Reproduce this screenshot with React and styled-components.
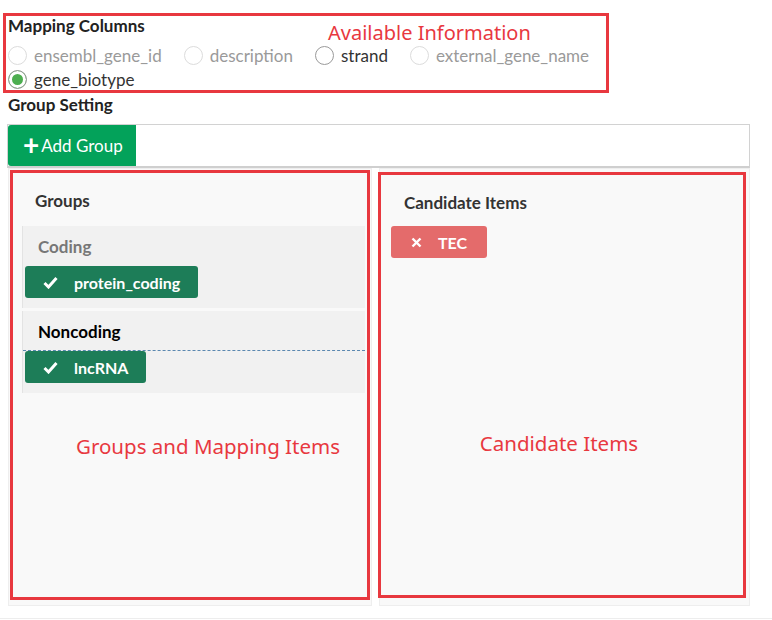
import React from 'react';
import styled, {createGlobalStyle} from 'styled-components';

const GlobalStyle = createGlobalStyle`
  body {
    margin: 0;
    background: #fff;
    font-family: Lato, "Noto Sans", sans-serif;
    color: #333;
  }
`;

const columns = [
  {name: 'ensembl_gene_id', disabled: true},
  {name: 'description', disabled: true},
  {name: 'strand'},
  {name: 'external_gene_name', disabled: true},
  {name: 'gene_biotype', checked: true},
];

const groups = [
  {title: 'Coding', muted: true, items: ['protein_coding']},
  {title: 'Noncoding', dashed: true, items: ['lncRNA']},
];

const CheckIcon = () => (
  <svg width="15" height="13" viewBox="0 0 15 13">
    <path d="M1.5 7 L5.5 11 L13.5 2" fill="none" stroke="#fff" strokeWidth="3" />
  </svg>
);

const CrossIcon = () => (
  <svg width="11" height="11" viewBox="0 0 11 11">
    <path d="M1.5 1.5 L9.5 9.5 M9.5 1.5 L1.5 9.5" fill="none" stroke="#fff" strokeWidth="2.4" />
  </svg>
);

export default function App() {
  return (
    <Page>
      <GlobalStyle/>
      <MappingBox>
        <Note $top={7} $left={322}>Available Information</Note>
        <SectionTitle>Mapping Columns</SectionTitle>
        <RadioList>
          {columns.map((c) => (
            <RadioItem key={c.name} $disabled={c.disabled}>
              <RadioDot $checked={c.checked} $disabled={c.disabled}/>
              {c.name}
            </RadioItem>
          ))}
        </RadioList>
      </MappingBox>
      <SettingTitle>Group Setting</SettingTitle>
      <Toolbar>
        <AddButton><Plus>+</Plus>Add Group</AddButton>
      </Toolbar>
      <Panels>
        <Panel>
          <Marked>
            <PanelTitle>Groups</PanelTitle>
            {groups.map((g) => (
              <GroupCard key={g.title}>
                <GroupTitle $muted={g.muted} $dashed={g.dashed}>{g.title}</GroupTitle>
                <TagRow>
                  {g.items.map((it) => (
                    <Tag key={it}><CheckIcon/>{it}</Tag>
                  ))}
                </TagRow>
              </GroupCard>
            ))}
            <CenterNote $top={260} $shift={36}>Groups and Mapping Items</CenterNote>
          </Marked>
        </Panel>
        <Panel>
          <Marked $side>
            <PanelTitle>Candidate Items</PanelTitle>
            <TagRow $pad={0} $lift={2}>
              <Tag $danger><CrossIcon/>TEC</Tag>
            </TagRow>
            <CenterNote $top={255} $shift={-6}>Candidate Items</CenterNote>
          </Marked>
        </Panel>
      </Panels>
      <BottomLine/>
    </Page>
  );
}

const Page = styled.div`
  width: 743px;
  padding: 13px 0 0 7px;
`;

const MappingBox = styled.div`
  position: relative;
  width: 598px;
  height: 74px;
  margin-left: -4px;
  border: 3px solid #e8383f;
  padding: 0 0 0 2px;
`;

const Note = styled.div`
  position: absolute;
  top: ${({$top}) => $top}px;
  left: ${({$left}) => $left}px;
  color: #e8383f;
  font-family: "Noto Sans", sans-serif;
  font-size: 20px;
  line-height: 20px;
`;

const SectionTitle = styled.div`
  font-weight: 700;
  font-size: 17px;
  line-height: 20px;
  color: #222;
`;

const RadioList = styled.div`
  display: flex;
  flex-wrap: wrap;
  column-gap: 22px;
  margin-top: 7px;
`;

const RadioItem = styled.label`
  display: flex;
  align-items: center;
  gap: 7px;
  height: 24px;
  font-size: 17px;
  color: ${({$disabled}) => ($disabled ? '#9a9a9a' : '#333')};
`;

const RadioDot = styled.span`
  box-sizing: border-box;
  width: 19px;
  height: 19px;
  border-radius: 50%;
  border: 1px solid ${({$disabled}) => ($disabled ? '#dcdcdc' : '#9a9a9a')};
  background: ${({$checked}) => ($checked ? '#4cae4f' : '#fff')};
  box-shadow: ${({$checked}) => ($checked ? 'inset 0 0 0 3px #fff' : 'none')};
`;

const SettingTitle = styled.div`
  font-weight: 700;
  font-size: 17px;
  line-height: 20px;
  margin: 2px 0 0 1px;
  color: #222;
`;

const Toolbar = styled.div`
  margin-top: 9px;
  border: 1px solid #d2d2d2;
  border-bottom: 2px solid #cfcfcf;
  height: 41px;
  display: flex;
`;

const AddButton = styled.button`
  display: flex;
  align-items: center;
  gap: 2px;
  width: 128px;
  height: 41px;
  border: none;
  border-radius: 3px 0 0 3px;
  background: #03a25a;
  color: #fff;
  font-family: Lato, "Noto Sans", sans-serif;
  font-size: 17px;
  padding: 0 0 0 15px;
`;

const Plus = styled.span`
  font-size: 28px;
  font-weight: 700;
  line-height: 20px;
  margin-top: -3px;
`;

const Panels = styled.div`
  display: grid;
  grid-template-columns: 364px 371px;
  column-gap: 7px;
  height: 438px;
  margin-left: 1px;
`;

const Panel = styled.div`
  background: #f9f9f9;
  border: 1px solid #eee;
  padding: 1px 1px 5px 1px;
`;

const Marked = styled.div`
  position: relative;
  box-sizing: border-box;
  height: ${({$side}) => ($side ? 'calc(100% - 4px)' : '100%')};
  margin: ${({$side}) => ($side ? '2px 2px 0 -3px' : '0')};
  border: 3px solid #e8383f;
  padding: 0 0 0 ${({$side}) => ($side ? 10 : 9)}px;
`;

const PanelTitle = styled.div`
  font-weight: 700;
  font-size: 17px;
  color: #333;
  line-height: 20px;
  padding: 18px 0 0 13px;
  height: 53px;
  box-sizing: border-box;
`;

const GroupCard = styled.div`
  background: #f1f1f1;
  border-left: 1px solid #e3e3e3;
  margin: 0 2px 3px 0;
  padding-bottom: 10px;
`;

const GroupTitle = styled.div`
  font-weight: 700;
  font-size: 17px;
  line-height: 20px;
  color: ${({$muted}) => ($muted ? '#777' : '#000')};
  padding: 11px 0 8px 15px;
  border-bottom: 1px ${({$dashed}) => ($dashed ? 'dashed #5b88b0' : 'solid transparent')};
`;

const TagRow = styled.div`
  display: flex;
  gap: 6px;
  padding-left: ${({$pad}) => ($pad === undefined ? 2 : $pad)}px;
  margin-top: ${({$lift}) => -($lift || 0)}px;
`;

const Tag = styled.span`
  display: inline-flex;
  align-items: center;
  gap: 16px;
  height: 32px;
  padding: ${({$danger}) => ($danger ? '0 20px 0 20px' : '0 18px 0 18px')};
  border-radius: 3px;
  background: ${({$danger}) => ($danger ? '#e46b6b' : '#1d7d58')};
  color: #fff;
  font-weight: 700;
  font-size: 16px;
`;

const CenterNote = styled.div`
  position: absolute;
  left: ${({$shift}) => $shift}px;
  right: 0;
  top: ${({$top}) => $top}px;
  text-align: center;
  color: #e8383f;
  font-family: "Noto Sans", sans-serif;
  font-size: 20.5px;
  line-height: 26px;
`;

const BottomLine = styled.div`
  margin: 12px 0 0 -7px;
  width: 772px;
  border-top: 1px solid #ededed;
`;
